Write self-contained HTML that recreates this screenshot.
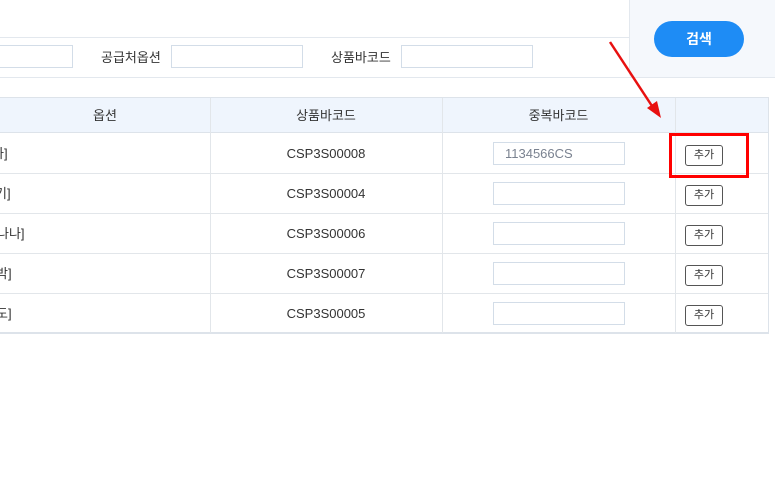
<!DOCTYPE html>
<html><head><meta charset="utf-8"><style>
*{margin:0;padding:0;box-sizing:border-box}
body{width:775px;height:503px;background:#fff;position:relative;overflow:hidden;font-family:"Liberation Sans","Noto Sans CJK KR",sans-serif;font-size:13px;color:#333}
.a{position:absolute}
.inp{position:absolute;border:1px solid #d3dde8;background:#fff;height:23px}
.lbl{position:absolute;top:47px;font-size:13px;color:#333}
.btn{position:absolute;left:685px;width:38px;height:21px;border:1px solid #555;border-radius:3px;font-size:11px;text-align:center;line-height:19px;background:#fff;color:#333}
.cell{position:absolute;height:40px;line-height:42px;text-align:center;font-size:13px;color:#333}
</style></head><body>
<div class="a" style="left:-5px;top:37px;width:640px;height:41px;border-top:1px solid #e3e8ee;border-bottom:1px solid #e3e8ee"></div>
<div class="a" style="left:629px;top:-5px;width:152px;height:83px;background:#f5f8fc;border:1px solid #e3e8ee;border-radius:5px"></div>
<div class="a" style="left:654px;top:21px;width:90px;height:36px;border-radius:18px;background:#1e8cf5;color:#fff;font-weight:bold;font-size:14px;text-align:center;line-height:36px">검색</div>
<div class="inp" style="left:-5px;top:45px;width:78px"></div>
<div class="lbl" style="left:101px">공급처옵션</div>
<div class="inp" style="left:171px;top:45px;width:132px"></div>
<div class="lbl" style="left:331px">상품바코드</div>
<div class="inp" style="left:401px;top:45px;width:132px"></div>

<div class="a" style="left:-5px;top:97px;width:774px;height:237px;border-top:1px solid #dde3ea;border-right:1px solid #dde3ea;border-bottom:2px solid #dde3ea"></div>
<div class="a" style="left:-5px;top:98px;width:773px;height:35px;background:#eff5fd;border-bottom:1px solid #dde3ea"></div>
<div class="a" style="left:210px;top:98px;width:1px;height:235px;background:#e2e6ea"></div>
<div class="a" style="left:442px;top:98px;width:1px;height:235px;background:#e2e6ea"></div>
<div class="a" style="left:675px;top:98px;width:1px;height:235px;background:#e2e6ea"></div>
<div class="cell" style="left:0;top:95px;width:210px">옵션</div>
<div class="cell" style="left:210px;top:95px;width:232px">상품바코드</div>
<div class="cell" style="left:442px;top:95px;width:233px">중복바코드</div>

<div class="a" style="left:-5px;top:173px;width:773px;height:1px;background:#e2e6ea"></div>
<div class="a" style="left:-5px;top:213px;width:773px;height:1px;background:#e2e6ea"></div>
<div class="a" style="left:-5px;top:253px;width:773px;height:1px;background:#e2e6ea"></div>
<div class="a" style="left:-5px;top:293px;width:773px;height:1px;background:#e2e6ea"></div>

<div class="cell" style="left:-8px;top:133px;text-align:left">다]</div>
<div class="cell" style="left:-5px;top:173px;text-align:left">기]</div>
<div class="cell" style="left:-3px;top:213px;text-align:left">나나]</div>
<div class="cell" style="left:-4px;top:253px;text-align:left">박]</div>
<div class="cell" style="left:-4px;top:293px;text-align:left">도]</div>

<div class="cell" style="left:210px;top:133px;width:232px">CSP3S00008</div>
<div class="cell" style="left:210px;top:173px;width:232px">CSP3S00004</div>
<div class="cell" style="left:210px;top:213px;width:232px">CSP3S00006</div>
<div class="cell" style="left:210px;top:253px;width:232px">CSP3S00007</div>
<div class="cell" style="left:210px;top:293px;width:232px">CSP3S00005</div>

<div class="inp" style="left:493px;top:142px;width:132px;color:#7a8290;font-size:13px;line-height:21px;padding-left:11px">1134566CS</div>
<div class="inp" style="left:493px;top:182px;width:132px"></div>
<div class="inp" style="left:493px;top:222px;width:132px"></div>
<div class="inp" style="left:493px;top:262px;width:132px"></div>
<div class="inp" style="left:493px;top:302px;width:132px"></div>

<div class="btn" style="top:145px">추가</div>
<div class="btn" style="top:185px">추가</div>
<div class="btn" style="top:225px">추가</div>
<div class="btn" style="top:265px">추가</div>
<div class="btn" style="top:305px">추가</div>

<div class="a" style="left:669px;top:133px;width:80px;height:45px;border:3px solid #f00"></div>
<svg class="a" style="left:0;top:0" width="775" height="503"><line x1="610" y1="42" x2="652" y2="106" stroke="#e81010" stroke-width="2.5"/><polygon points="661,118 647,108 657,101" fill="#e81010"/></svg>
</body></html>
